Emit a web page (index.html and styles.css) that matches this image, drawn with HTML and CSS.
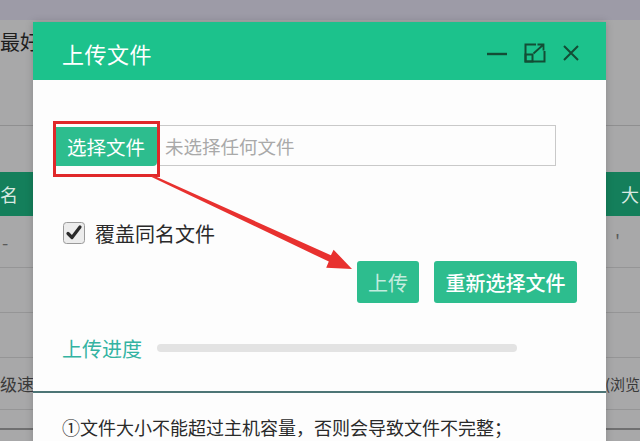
FILE: index.html
```html
<!DOCTYPE html>
<html lang="zh-CN">
<head>
<meta charset="utf-8">
<title>上传文件</title>
<link rel="stylesheet" href="styles.css">
</head>
<body>
<div class="page">
  <div class="topbar"></div>
  <div class="notice"><span class="notice-text">最好,</span></div>
  <div class="spacer"></div>
  <div class="thead">
    <span class="th-left">名</span>
    <span class="th-right">大</span>
  </div>
  <div class="row"><span class="cell-left">-</span><span class="cell-right">'</span></div>
  <div class="row short"></div>
  <div class="row short"></div>
  <div class="row"><span class="cell-left slow">级速</span><span class="cell-right slow">(浏览</span></div>
  <div class="row last"></div>

  <div class="dialog">
    <div class="dlg-header">
      <span class="dlg-title">上传文件</span>
      <div class="dlg-tools">
        <svg class="tool" width="22" height="20" viewBox="0 0 22 20"><path d="M1 11 H21" stroke="#134d35" stroke-width="2.4" fill="none"/></svg>
        <svg class="tool" width="22" height="20" viewBox="0 0 22 20"><path d="M12 1.5 H1.5 V18.5 H20.5 V8" stroke="#134d35" stroke-width="2" fill="none"/><rect x="1.5" y="11.5" width="7" height="7" stroke="#134d35" stroke-width="2" fill="none"/><path d="M9.5 10.5 L19.5 1.5 M13.5 1.5 H19.5 V7.5" stroke="#134d35" stroke-width="1.8" fill="none"/></svg>
        <svg class="tool" width="18" height="18" viewBox="0 0 18 18"><path d="M2 2 L16 16 M16 2 L2 16" stroke="#134d35" stroke-width="2" fill="none"/></svg>
      </div>
    </div>
    <div class="dlg-body">
      <div class="file-row">
        <span class="file-btn">选择文件</span>
        <span class="file-name">未选择任何文件</span>
        <span class="mark-box"></span>
      </div>
      <label class="check-row">
        <svg class="checkbox" width="22" height="22" viewBox="0 0 22 22"><rect x="0.5" y="0.5" width="21" height="21" rx="3" fill="#ececec" stroke="#9a9a9a"/><path d="M5 11.5 L9 15.5 L17 5" stroke="#2b2b2b" stroke-width="3.2" fill="none" stroke-linecap="round" stroke-linejoin="round"/></svg>
        <span>覆盖同名文件</span>
      </label>
      <div class="btn-row">
        <span class="btn btn-upload">上传</span>
        <span class="btn btn-reselect">重新选择文件</span>
      </div>
      <div class="progress-row">
        <span class="progress-label">上传进度</span>
        <span class="progress-bar"></span>
      </div>
      <div class="sep"></div>
      <p class="tip">①文件大小不能超过主机容量，否则会导致文件不完整；</p>
    </div>
  </div>

  <svg class="arrow" width="640" height="441" viewBox="0 0 640 441">
    <polygon points="152.4,175.1 330.9,255.2 333.6,249.7 352,269 326.2,267.8 328.8,261.6 151.6,176.9" fill="#e8312f"/>
  </svg>
</div>
</body>
</html>
```

FILE: styles.css
```css
* { box-sizing: border-box; }
html, body { margin: 0; padding: 0; }
body {
  width: 640px;
  height: 441px;
  overflow: hidden;
  font-family: "Noto Sans CJK SC", "Noto Sans", "Liberation Sans", sans-serif;
}
.page {
  position: relative;
  width: 640px;
  height: 441px;
  overflow: hidden;
  background: #a8a8a9;
}
.topbar {
  height: 20px;
  background: #9d9ba7;
}
.notice {
  height: 106px;
  border-bottom: 1px solid #8f8f90;
  padding-top: 8px;
  font-size: 20px;
  line-height: 28px;
  color: #1e1e1e;
  white-space: nowrap;
}
.notice-text { display: inline-block; margin-left: 0; }
.spacer { height: 46px; }
.thead {
  height: 44px;
  background: #147f5b;
  color: #d9e9e1;
  font-size: 18px;
  display: flex;
  justify-content: space-between;
  align-items: center;
  white-space: nowrap;
}
.th-left { margin-left: 0; }
.th-right { margin-right: 1px; }
.row {
  height: 52px;
  border-bottom: 1px solid #959596;
  display: flex;
  justify-content: space-between;
  align-items: center;
  color: #5a5a5a;
  font-size: 18px;
  white-space: nowrap;
}
.row.short { height: 45px; }
.row.last { border-bottom: 2px solid #6f6f70; height: 20px; }
.cell-left { margin-left: 2px; }
.cell-right { margin-right: 20px; }
.slow { color: #3a3a3a; font-size: 17px; }
.cell-left.slow { margin-left: 0; }
.cell-right.slow { margin-right: 0; font-size: 15px; }

.dialog {
  position: absolute;
  left: 33px;
  top: 22px;
  width: 573px;
  height: 440px;
  background: #fdfdfd;
  box-shadow: 0 0 8px rgba(0,0,0,0.18);
}
.dlg-header {
  height: 58px;
  background: #1cc28c;
  display: flex;
  align-items: center;
  justify-content: space-between;
  padding: 4px 26px 0 29px;
}
.dlg-title {
  color: #ffffff;
  font-size: 22px;
  letter-spacing: 0.5px;
}
.dlg-tools {
  display: flex;
  align-items: center;
  gap: 16px;
}
.dlg-body {
  padding: 45px 0 0 0;
}
.file-row {
  position: relative;
  display: flex;
  align-items: stretch;
  height: 41px;
  margin: 0 50px 0 22px;
}
.file-btn {
  width: 102px;
  background: #2dbd8e;
  color: #ffffff;
  font-size: 19.5px;
  display: flex;
  align-items: center;
  justify-content: center;
  border-radius: 0 0 4px 0;
  margin-top: 2px;
}
.file-name {
  flex: 1;
  border: 1px solid #c9c9c9;
  border-left: none;
  color: #a9a9a9;
  font-size: 18.5px;
  display: flex;
  align-items: center;
  padding-left: 8px;
}
.mark-box {
  position: absolute;
  left: -2px;
  top: -4px;
  width: 107px;
  height: 56px;
  border: 3px solid #e0282a;
}
.check-row {
  display: flex;
  align-items: center;
  gap: 10px;
  margin: 56px 0 0 30px;
  height: 22px;
  font-size: 20px;
  color: #2a2a2a;
}
.btn-row {
  display: flex;
  justify-content: flex-end;
  gap: 15px;
  margin: 17px 29px 0 0;
}
.btn {
  height: 42px;
  background: #2dbd8e;
  color: #ffffff;
  font-size: 20px;
  display: flex;
  align-items: center;
  justify-content: center;
  border-radius: 3px;
}
.btn-reselect {
  width: 143px;
  font-weight: 500;
}
.btn-upload {
  width: 62px;
  color: rgba(255,255,255,0.72);
}
.progress-row {
  display: flex;
  align-items: center;
  gap: 15px;
  margin: 33px 0 0 29px;
  height: 24px;
}
.progress-label {
  color: #33b3a2;
  font-size: 20px;
}
.progress-bar {
  width: 360px;
  height: 8px;
  border-radius: 4px;
  background: #e3e3e3;
}
.sep {
  margin-top: 31px;
  height: 2px;
  background: #4d7576;
}
.tip {
  margin: 22px 0 0 29px;
  font-size: 18px;
  line-height: 24px;
  color: #2a2a2a;
  white-space: nowrap;
}
.arrow {
  position: absolute;
  left: 0;
  top: 0;
  pointer-events: none;
}
```
